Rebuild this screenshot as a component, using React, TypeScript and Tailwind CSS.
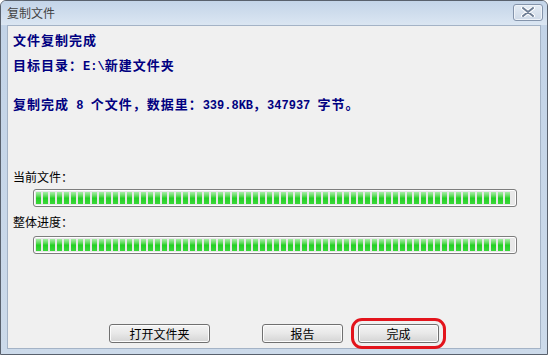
import React from "react";

const blocks = Array.from({ length: 68 });

function Bar() {
  return (
    <div className="ml-[20px] w-[484px] h-[18px] rounded-[3px] border border-[#7d7d7d] bg-[#e8e8e8] p-[2px] shadow-[inset_0_0_0_1px_#ffffff]">
      <div className="flex h-full gap-[2px] overflow-hidden">
        {blocks.map((_, i) => (
          <div
            key={i}
            className="w-[5px] shrink-0 h-full bg-gradient-to-b from-[#a6eea6] via-[#22d022] to-[#3ad83a]"
          />
        ))}
      </div>
    </div>
  );
}

function Btn({ w, label }: { w: string; label: string }) {
  return (
    <div
      className={`${w} h-[19px] rounded-[3px] border border-[#707070] bg-gradient-to-b from-[#f4f4f4] via-[#e8e8e8] to-[#d4d4d4] shadow-[inset_0_0_0_1px_#fcfcfc] flex items-center justify-center text-[12px] text-black leading-none`}
    >
      {label}
    </div>
  );
}

function L({ children }: { children: React.ReactNode }) {
  return (
    <span className="font-['Liberation_Mono',monospace] text-[12px] tracking-normal whitespace-pre">
      {children}
    </span>
  );
}

export default function App() {
  return (
    <div className="w-[548px] h-[355px] flex flex-col rounded-t-[6px] border border-[#59616d] bg-gradient-to-b from-[#c2d3e7] to-[#ccdaea] overflow-hidden font-['SimSun','Noto_Sans_CJK_SC',sans-serif]">
      <div className="h-[24px] shrink-0 flex items-center justify-between pl-[6px] pr-[4px] bg-gradient-to-b from-[#c3d4e8] to-[#dbe6f2]">
        <span className="text-[12px] text-[#434343] leading-none">复制文件</span>
        <div className="w-[30px] h-[17px] mt-[-2px] rounded-[3px] border border-[#8494ab] bg-gradient-to-b from-[#e4ecf5] to-[#cfdae8] flex items-center justify-center shadow-[inset_0_0_0_1px_#eef3f9]">
          <svg width="14" height="10" viewBox="0 0 14 10">
            <path d="M2 1 L12 9 M12 1 L2 9" stroke="#ffffff" strokeWidth="4" strokeLinecap="round" />
            <path d="M2 1 L12 9 M12 1 L2 9" stroke="#6f7f96" strokeWidth="2" strokeLinecap="round" />
          </svg>
        </div>
      </div>
      <div className="flex-1 mx-[6px] mb-[5px] border border-[#a4b3c6] bg-[#f0f0f0] flex flex-col pl-[5px]">
        <div className="mt-[6px] h-[16px] text-[13px] leading-[16px] font-bold tracking-[1px] text-[#000080]">文件复制完成</div>
        <div className="mt-[9px] h-[16px] text-[13px] leading-[16px] font-bold tracking-[1px] text-[#000080] whitespace-nowrap">
          目标目录：<L>E:\</L>新建文件夹
        </div>
        <div className="mt-[23px] h-[16px] text-[13px] leading-[16px] font-bold tracking-[1px] text-[#000080] whitespace-nowrap">
          复制完成<L> 8 </L>个文件，数据里：<L>339.8KB</L>，<L>347937 </L>字节。
        </div>
        <div className="mt-[57px] h-[16px] text-[12px] leading-[16px] text-black">当前文件：</div>
        <div className="mt-[4px]">
          <Bar />
        </div>
        <div className="mt-[7px] h-[16px] text-[12px] leading-[16px] text-black">整体进度：</div>
        <div className="mt-[6px]">
          <Bar />
        </div>
        <div className="mt-auto mb-[5px] flex items-center pl-[96px]">
          <Btn w="w-[101px]" label="打开文件夹" />
          <div className="ml-[52px]">
            <Btn w="w-[81px]" label="报告" />
          </div>
          <div className="ml-[15px] relative">
            <Btn w="w-[81px]" label="完成" />
            <div className="absolute left-[-7px] top-[-6px] w-[95px] h-[31px] rounded-[11px] border-[3px] border-[#e3141c]" />
          </div>
        </div>
      </div>
    </div>
  );
}
